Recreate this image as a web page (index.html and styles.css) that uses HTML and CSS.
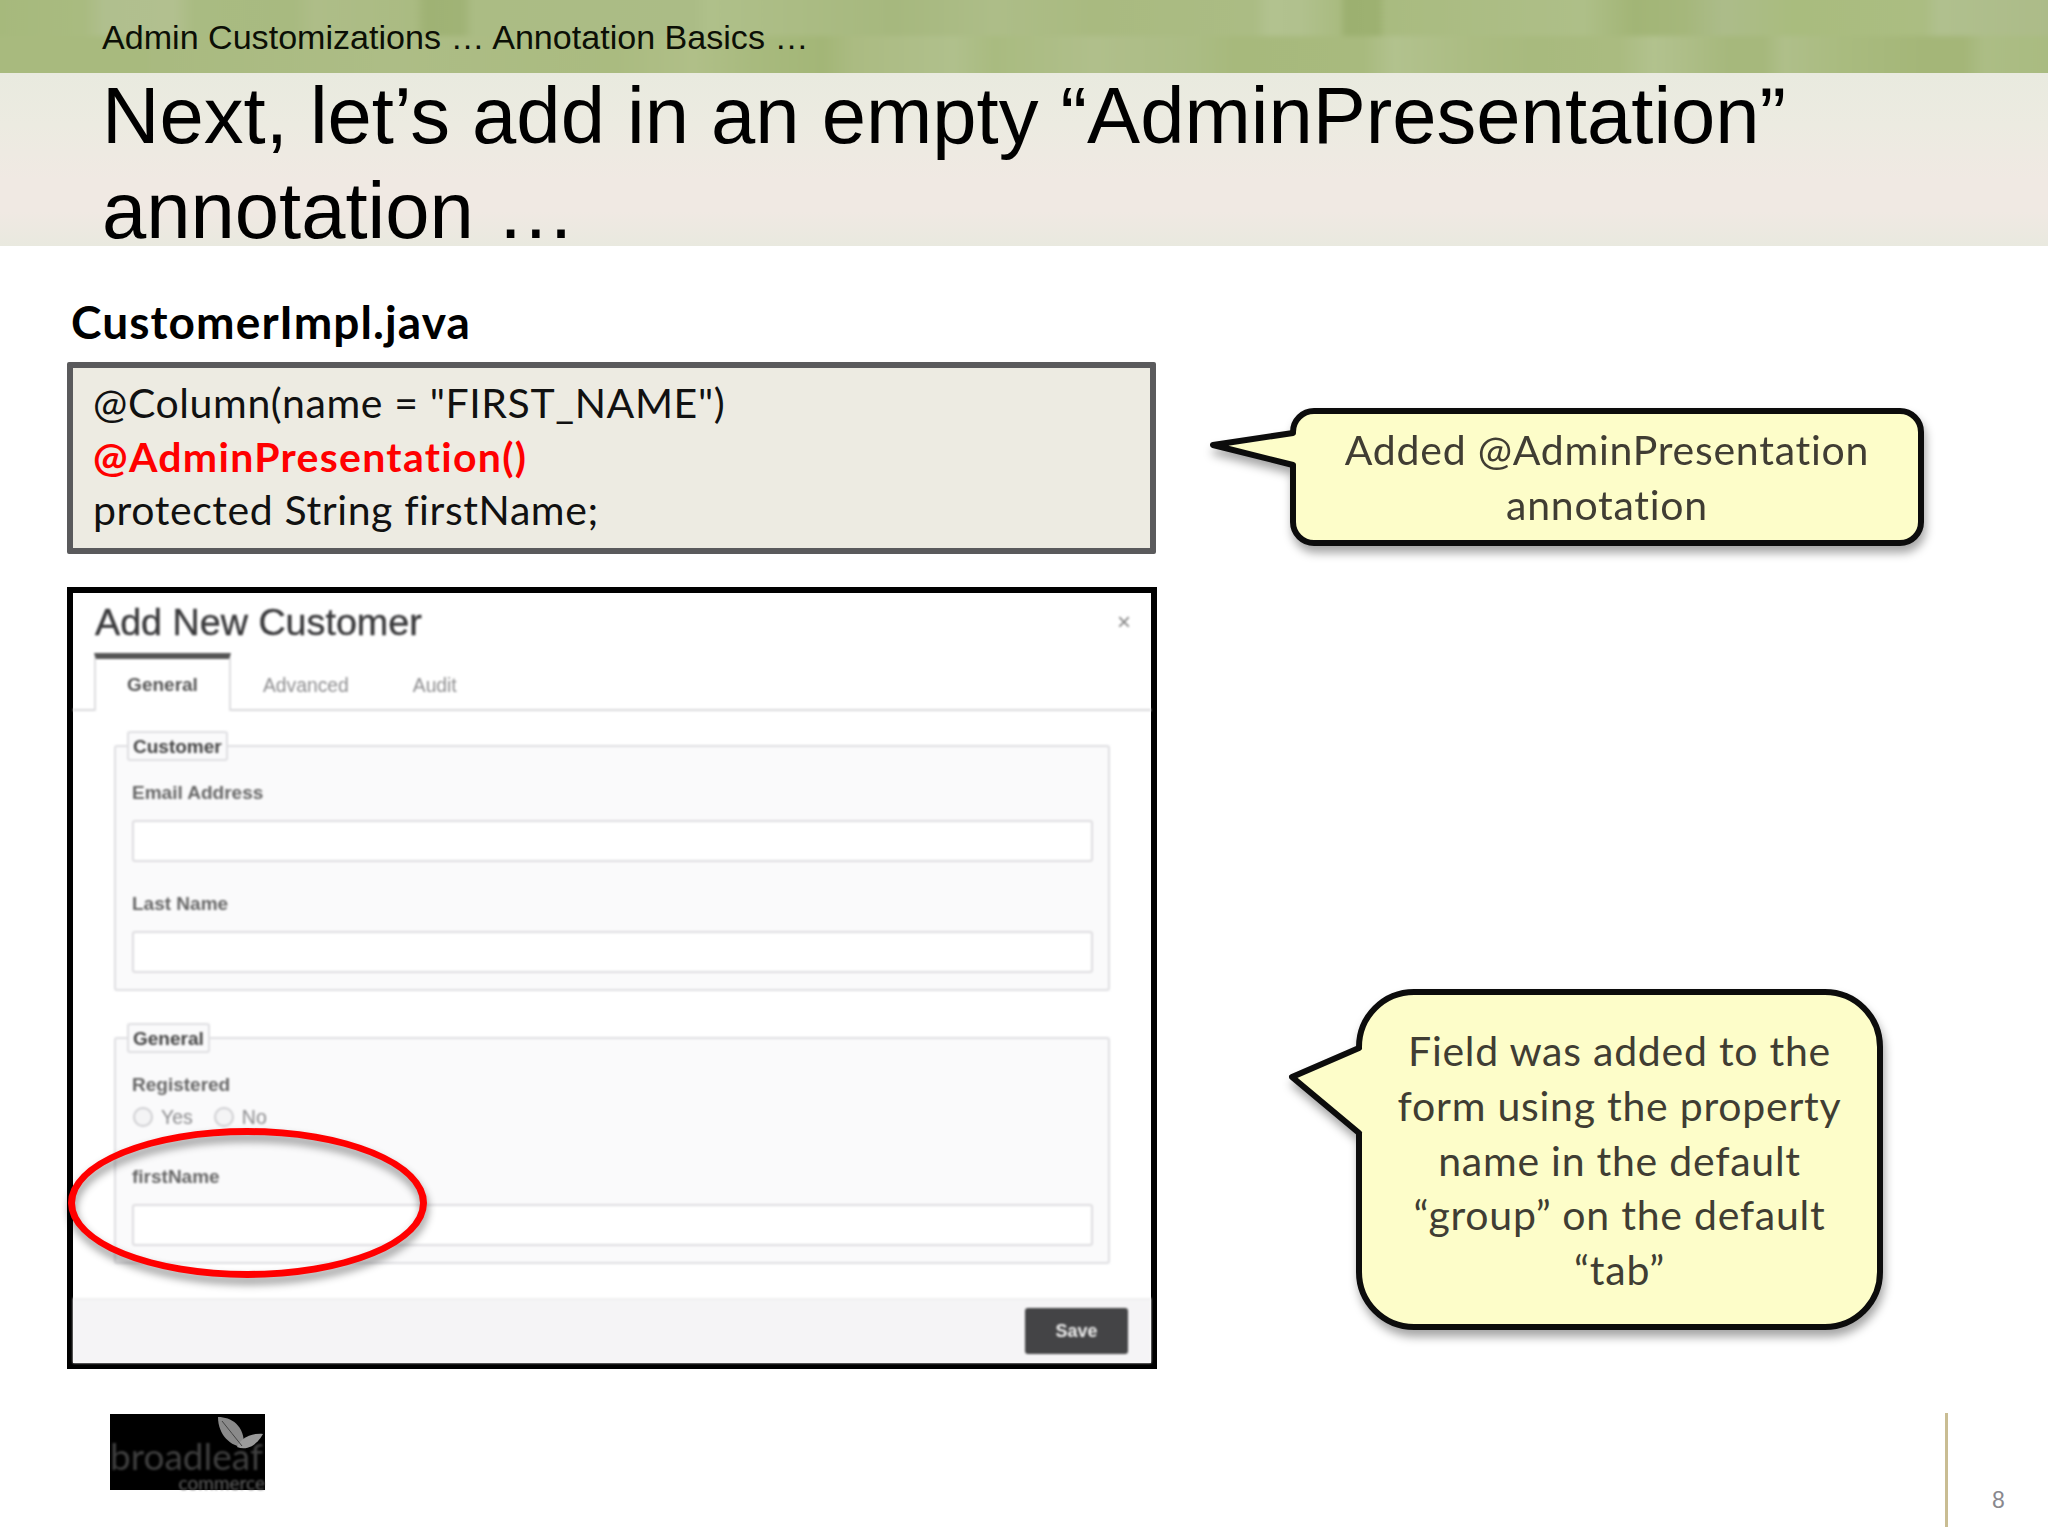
FILE: index.html
```html
<!DOCTYPE html>
<html lang="en">
<head>
<meta charset="utf-8">
<title>Admin Customizations – Annotation Basics</title>
<link rel="stylesheet" href="styles.css">
</head>
<body>
<div class="slide">
  <header class="banner"><span class="banner-text">Admin Customizations … Annotation Basics …</span></header>
  <div class="title-band">
    <h1 class="title">Next, let’s add in an empty “AdminPresentation” annotation …</h1>
  </div>
  <main class="content">
    <section class="left">
      <h2 class="file-name">CustomerImpl.java</h2>
      <div class="code">
        <div>@Column(name = "FIRST_NAME")</div>
        <div class="code-new">@AdminPresentation()</div>
        <div>protected String firstName;</div>
      </div>
      <div class="shot">
        <div class="shot-inner">
          <div class="modal-head">
            <span class="modal-title">Add New Customer</span>
            <span class="modal-close">×</span>
          </div>
          <div class="tabs">
            <span class="tab tab-active">General</span>
            <span class="tab tab-advanced">Advanced</span>
            <span class="tab tab-audit">Audit</span>
          </div>
          <fieldset class="group">
            <legend class="legend">Customer</legend>
            <div class="label label-first">Email Address</div>
            <div class="input"></div>
            <div class="label">Last Name</div>
            <div class="input"></div>
          </fieldset>
          <fieldset class="group group-second">
            <legend class="legend">General</legend>
            <div class="label label-first">Registered</div>
            <div class="radios">
              <span class="radio"></span><span class="radio-text">Yes</span>
              <span class="radio radio-no"></span><span class="radio-text">No</span>
            </div>
            <div class="label label-after-radios">firstName</div>
            <div class="input"></div>
          </fieldset>
          <div class="modal-foot"><span class="save">Save</span></div>
        </div>
        <div class="ring"></div>
      </div>
    </section>
    <aside class="right">
      <div class="callout callout-one">
        <svg class="tail tail-one" width="100" height="50" viewBox="0 0 100 50">
          <polygon class="tail-fill" points="94,8 88,8 8,20 88,40 94,40"/>
          <polyline class="tail-line" points="88,8 8,20 88,40"/>
        </svg>
        Added @AdminPresentation<br>annotation
      </div>
      <div class="callout callout-two">
        <svg class="tail tail-two" width="85" height="100" viewBox="0 0 85 100">
          <polygon class="tail-fill" points="81,8 75,8 8,37 75,93 81,93"/>
          <polyline class="tail-line" points="75,8 8,37 75,93"/>
        </svg>
        Field was added to the<br>form using the property<br>name in the default<br>“group” on the default<br>“tab”
      </div>
    </aside>
  </main>
  <footer class="footer">
    <div class="logo">
      <svg class="logo-leaf" width="50" height="38" viewBox="0 0 50 38">
        <path class="leaf-a" d="M3 2 C16 2 30 10 29 32 C16 32 3 20 3 2 Z"/>
        <path class="leaf-b" d="M48 19 C38 18 26 22 22 32 C32 36 42 30 48 19 Z"/>
        <path class="leaf-vein" d="M7 6 C14 14 20 23 27 31"/>
      </svg>
      <span class="logo-word">broadleaf</span>
      <span class="logo-sub">commerce</span>
    </div>
    <div class="pager">8</div>
  </footer>
</div>
</body>
</html>
```
FILE: styles.css
```css
* { box-sizing: border-box; }
html, body { margin: 0; padding: 0; background: #fff; }
.slide {
  width: 2048px;
  height: 1536px;
  overflow: hidden;
  display: flex;
  flex-direction: column;
  background: #fff;
  font-family: "Liberation Sans", Arial, sans-serif;
}
.banner {
  position: relative;
  height: 73px;
  flex: none;
  overflow: hidden;
  padding: 17px 0 0 102px;
  font-size: 34.1px;
  line-height: 40px;
  color: #0c0f06;
  background-color: #abbc84;
}
.banner::before {
  content: "";
  position: absolute;
  left: -6px;
  right: -6px;
  top: -6px;
  bottom: -6px;
  filter: blur(2.5px);
  background-image:
    linear-gradient(90deg,
      #a6b97c 0, #a9bb80 90px, #b0bf8e 110px, #b2c08f 180px, #a9bb82 200px, #a8ba80 300px,
      #aebd88 320px, #aabb82 420px, #9fb274 432px, #a0b376 468px, #abbc84 480px, #abbc86 700px,
      #afc08a 715px, #abbc84 800px, #a6b87e 900px, #adbd88 1000px, #a9ba80 1100px,
      #abbc84 1260px, #b2c28f 1275px, #b1c18e 1305px, #a9bb80 1345px, #9cb070 1352px, #9db171 1384px,
      #a9bb80 1392px, #aebf88 1590px, #a2b576 1640px, #a5b77b 1690px, #acbc8a 1730px,
      #a9bc7e 1800px, #abbd82 1930px, #b0c08e 1945px, #acbb88 2060px),
    linear-gradient(90deg,
      #a8ba7e 0, #a8ba7e 150px, #a9ba80 160px, #adbd86 400px, #aabb80 620px, #b0bf88 700px,
      #a8ba7e 760px, #a3b677 830px, #abbb82 860px, #b0c08c 960px, #a9bb80 1000px,
      #b0bf8b 1100px, #abbc84 1200px, #a7b97c 1240px, #a8ba7e 1370px, #b2c28e 1400px, #abbc82 1480px,
      #a8ba7e 1540px, #aabb80 1625px, #b2c28e 1660px, #aebe88 1690px, #a6b87c 1735px, #a6b87c 1770px,
      #afbf8a 1790px, #a9bb7f 1850px, #a4b678 1930px, #a4b678 1970px, #acbd85 1990px, #a9bb80 2060px);
  background-size: 100% 42px, 100% 43px;
  background-position: 0 0, 0 42px;
  background-repeat: no-repeat;
}
.banner-text { position: relative; }
.title-band {
  height: 173px;
  flex: none;
  padding-left: 102px;
  background: linear-gradient(180deg, #e9eadf 0, #ecebe1 30%, #f0e9e3 62%, #f0e9e3 80%, #e9e9df 100%);
}
.title {
  margin: -5px 0 0;
  width: 1800px;
  font-size: 79.6px;
  font-weight: 400;
  line-height: 95px;
  color: #000;
}
.content {
  flex: none;
  display: grid;
  grid-template-columns: 1157px 1fr;
  padding-left: 67px;
  height: 1167px;
}
.left { display: flex; flex-direction: column; align-items: flex-start; }
.file-name {
  margin: 46px 0 0 4px;
  height: 70px;
  font-family: Lato, "Open Sans", sans-serif;
  font-size: 46px;
  font-weight: 700;
  letter-spacing: 1.1px;
  line-height: 60px;
  color: #000;
}
.code {
  width: 1089px;
  height: 192px;
  padding: 8px 0 0 20px;
  border: 6px solid #5a5a5c;
  border-radius: 2px;
  background: #edebe2;
  font-family: Lato, "Open Sans", sans-serif;
  font-size: 41px;
  letter-spacing: 0.6px;
  line-height: 53.5px;
  color: #111;
}
.code-new { color: #f00; font-weight: 700; letter-spacing: 1.3px; }
.shot {
  position: relative;
  width: 1090px;
  margin-top: 33px;
  border: 6px solid #000;
  background: #fff;
}
.shot-inner { filter: blur(0.8px); color: #555; }
.modal-head {
  height: 60px;
  padding: 0 20px 2px 22px;
  display: flex;
  justify-content: space-between;
  align-items: center;
}
.modal-title { font-size: 37.7px; color: #3a3a3c; -webkit-text-stroke: 0.4px #3a3a3c; }
.modal-close { font-size: 24px; color: #888; }
.tabs {
  height: 58px;
  border-bottom: 2px solid #d9d9dc;
  padding-left: 21px;
  display: flex;
}
.tab {
  font-size: 19.3px;
  line-height: 54px;
  color: #8e8e90;
}
.tab-active {
  width: 137px;
  height: 58px;
  font-size: 19px;
  line-height: 52px;
  border: 2px solid #dfdfe1;
  border-top: 6px solid #555;
  border-bottom: 0;
  background: #fff;
  text-align: center;
  color: #555;
  font-weight: 700;
}
.tab-advanced { margin-left: 32px; padding-top: 6px; }
.tab-audit { margin-left: 64px; padding-top: 6px; }
.group {
  margin: 20px 41px 0;
  padding: 0 15px 16px 16px;
  border: 2px solid #dfdfe2;
  border-radius: 3px;
  background: #fafafb;
  min-width: 0;
}
.group-second { margin-top: 32px; }
.legend {
  margin-left: -5px;
  padding: 0 4px;
  height: 30px;
  border: 2px solid #dfdfe2;
  border-radius: 3px;
  background: #fafafb;
  font-size: 19px;
  font-weight: 700;
  line-height: 28px;
  color: #444;
}
.label {
  height: 24px;
  margin-bottom: 16px;
  font-size: 19px;
  font-weight: 700;
  line-height: 26px;
  color: #666;
}
.label-first { margin-top: 19px; }
.label-after-radios { margin-top: 35px; }
.input {
  height: 42px;
  margin-bottom: 29px;
  border: 2px solid #dedde0;
  border-radius: 3px;
  background: #fff;
}
.group > .input:last-child { margin-bottom: 0; }
.radios {
  margin-top: -7px;
  height: 24px;
  display: flex;
  align-items: center;
}
.radio {
  width: 20px;
  height: 20px;
  margin-left: 1px;
  margin-right: 8px;
  border: 2px solid #cfcfd2;
  border-radius: 50%;
  background: #f4f4f5;
}
.radio-no { margin-left: 21px; }
.radio-text { font-size: 19.5px; color: #8b8b8d; }
.modal-foot {
  margin-top: 34px;
  height: 65px;
  padding: 8px 23px 0 0;
  display: flex;
  justify-content: flex-end;
  align-items: flex-start;
  border-top: 2px solid #efeff0;
  background: #f5f4f6;
}
.save {
  width: 103px;
  height: 46px;
  border-radius: 3px;
  background: #444446;
  color: #eee;
  font-size: 18px;
  font-weight: 700;
  line-height: 46px;
  text-align: center;
}
.ring {
  position: absolute;
  left: -5px;
  top: 535px;
  width: 359px;
  height: 150px;
  border: 7px solid #f00;
  border-radius: 50%;
  filter: drop-shadow(1px 6px 4px rgba(0, 0, 0, 0.45));
}
.right { display: flex; flex-direction: column; align-items: flex-start; }
.callout {
  position: relative;
  background: #fdfdc9;
  border: 6px solid #0c0c0c;
  font-family: Lato, "Open Sans", sans-serif;
  font-size: 41px;
  letter-spacing: 0.75px;
  line-height: 54.8px;
  color: #403d33;
  text-align: center;
  filter: drop-shadow(2px 7px 5px rgba(0, 0, 0, 0.35));
}
.callout-one {
  margin: 162px 0 0 66px;
  width: 634px;
  height: 138px;
  padding-top: 9px;
  border-radius: 24px;
}
.callout-two {
  margin: 443px 0 0 132px;
  width: 527px;
  height: 341px;
  padding-top: 29px;
  border-radius: 58px;
}
.tail { position: absolute; overflow: visible; }
.tail-one { left: -91px; top: 11px; }
.tail-two { left: -78px; top: 45px; }
.tail-fill { fill: #fdfdc9; }
.tail-line { fill: none; stroke: #0c0c0c; stroke-width: 6; stroke-linejoin: round; stroke-linecap: round; }
.footer {
  flex: 1;
  min-height: 0;
  display: flex;
  justify-content: space-between;
  align-items: flex-start;
  padding-left: 110px;
}
.logo {
  position: relative;
  width: 155px;
  height: 76px;
  margin-top: 1px;
  background: #000;
  font-family: Lato, "Open Sans", sans-serif;
}
.logo-word {
  position: absolute;
  left: 0;
  top: 25px;
  filter: blur(0.9px);
  font-size: 37px;
  line-height: 34px;
  color: #3f3f3f;
  white-space: nowrap;
}
.logo-sub {
  position: absolute;
  right: 0;
  top: 61px;
  filter: blur(0.8px);
  font-size: 19px;
  line-height: 15px;
  color: #5e5e5e;
}
.logo-leaf { position: absolute; right: 0; top: 1px; filter: blur(0.7px); }
.leaf-a { fill: #8a8a8a; }
.leaf-b { fill: #9a9a9a; }
.leaf-vein { fill: none; stroke: #444; stroke-width: 1; }
.pager {
  width: 103px;
  height: 114px;
  border-left: 3px solid #c9bd93;
  padding: 72px 0 0 44px;
  font-size: 23px;
  line-height: 30px;
  color: #89888e;
}
```
